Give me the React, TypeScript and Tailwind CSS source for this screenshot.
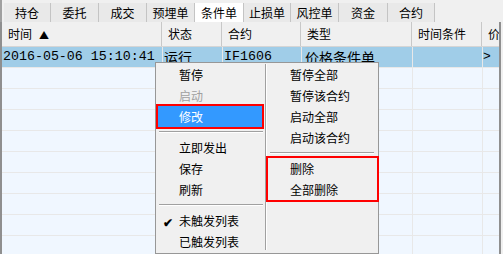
import React from "react";

const tabs = [
  { label: "持仓", w: "w-[47px]" },
  { label: "委托", w: "w-[48px]" },
  { label: "成交", w: "w-[48px]" },
  { label: "预埋单", w: "w-[48px]" },
  { label: "条件单", w: "w-[49px]", active: true },
  { label: "止损单", w: "w-[47px]" },
  { label: "风控单", w: "w-[48px]" },
  { label: "资金", w: "w-[49px]" },
  { label: "合约", w: "w-[47px]" },
];

const cols = ["w-[160px]", "w-[60px]", "w-[79px]", "w-[111px]", "w-[70px]", "w-[17px]"];

const cjk = { fontFamily: '"Noto Sans CJK SC", "Liberation Sans", sans-serif' };
const mono = { fontFamily: '"Liberation Mono", "Noto Sans CJK SC", monospace' };

const Sep = () => (
  <div className="h-[10px] flex items-center pl-[1px] pr-[2px]">
    <div className="w-full border-t border-[#a0a0a0] border-b border-b-white" />
  </div>
);

const Item = ({ children, disabled, checked }: { children: React.ReactNode; disabled?: boolean; checked?: boolean }) => (
  <div className={`relative h-[21px] flex items-center pl-[21px] text-[12px] ${disabled ? "text-[#a0a0a0]" : "text-black"}`}>
    {checked && <span className="absolute left-[5px] top-[3px] text-[12px] font-bold">✔</span>}
    {children}
  </div>
);

export default function App() {
  return (
    <div className="w-[503px] h-[254px] bg-[#f0f0f0] relative overflow-hidden" style={cjk}>
      {/* tabs */}
      <div className="h-[22px] flex items-end pl-[2px] border-l-2 border-[#a0a0a0]">
        {tabs.map((t) => (
          <div
            key={t.label}
            className={`${t.w} h-[19px] flex items-center justify-center text-[12px] text-black border-r border-[#c4c4c4] ${t.active ? "bg-white" : "bg-[#e9e9e9]"}`}
          >
            {t.label}
          </div>
        ))}
      </div>

      {/* table */}
      <div className="w-[501px] border-x-2 border-[#8f8f8f] h-[232px] bg-[#f0f7ff]">
        <div className="h-[25px] flex bg-[#f0f0f0] border-b border-[#d5d5d5] text-[12px] text-black">
          {["时间", "状态", "合约", "类型", "时间条件", "价"].map((h, i) => (
            <div key={h} className={`${cols[i]} shrink-0 flex items-center pl-[6px] overflow-hidden whitespace-nowrap ${i < 5 ? "border-r border-[#c8c8c8]" : ""}`}>
              {h}
              {i === 0 && <span className="ml-[7px] text-[10px]">▲</span>}
            </div>
          ))}
        </div>
        <div className="h-[21px] flex bg-[#a0cde8] border-b border-[#e8e8e8] text-[14px] text-black">
          <div className={`${cols[0]} shrink-0 flex items-center pl-[1px] text-[13.3px]`} style={mono}>2016-05-06 15:10:41</div>
          <div className={`${cols[1]} shrink-0 flex items-center pl-[1px] border-l border-[#e8e8e8]`}>运行</div>
          <div className={`${cols[2]} shrink-0 flex items-center pl-[1px] border-l border-[#e8e8e8] text-[13.3px]`} style={mono}>IF1606</div>
          <div className={`${cols[3]} shrink-0 flex items-center pl-[3px] border-l border-[#e8e8e8]`}>价格条件单</div>
          <div className={`${cols[4]} shrink-0 border-l border-[#e8e8e8]`} />
          <div className={`${cols[5]} shrink-0 flex items-center border-l border-[#e8e8e8] text-[13px]`} style={mono}>&gt;</div>
        </div>
        {Array.from({ length: 9 }).map((_, r) => (
          <div key={r} className="h-[21px] flex border-b border-[#e8e8e8]">
            {cols.map((c, i) => (
              <div key={i} className={`${c} shrink-0 ${i > 0 ? "border-l border-[#e8e8e8]" : ""}`} />
            ))}
          </div>
        ))}
      </div>

      {/* context menu */}
      <div className="absolute left-[155px] top-[62px] w-[224px] h-[192px] bg-[#f0f0f0] border border-[#979797] flex p-[2px] pt-[1px]">
        <div className="w-[107px] shrink-0">
          <Item>暂停</Item>
          <Item disabled>启动</Item>
          <div className="h-[21px] mr-[3px] flex items-center pl-[21px] text-[12px] text-white bg-[#3399ff] ring-2 ring-[#ff0000]">
            修改
          </div>
          <Sep />
          <Item>立即发出</Item>
          <Item>保存</Item>
          <Item>刷新</Item>
          <Sep />
          <Item checked>未触发列表</Item>
          <Item>已触发列表</Item>
        </div>
        <div className="w-[4px] shrink-0 flex justify-start h-[186px]">
          <div className="w-[2px] border-l border-[#a0a0a0] border-r border-r-white" />
        </div>
        <div className="flex-1">
          <Item>暂停全部</Item>
          <Item>暂停该合约</Item>
          <Item>启动全部</Item>
          <Item>启动该合约</Item>
          <Sep />
          <div className="ring-2 ring-[#ff0000] mr-[-1px] ml-[-1px] pl-[1px]">
            <Item>删除</Item>
            <Item>全部删除</Item>
          </div>
        </div>
      </div>
    </div>
  );
}
